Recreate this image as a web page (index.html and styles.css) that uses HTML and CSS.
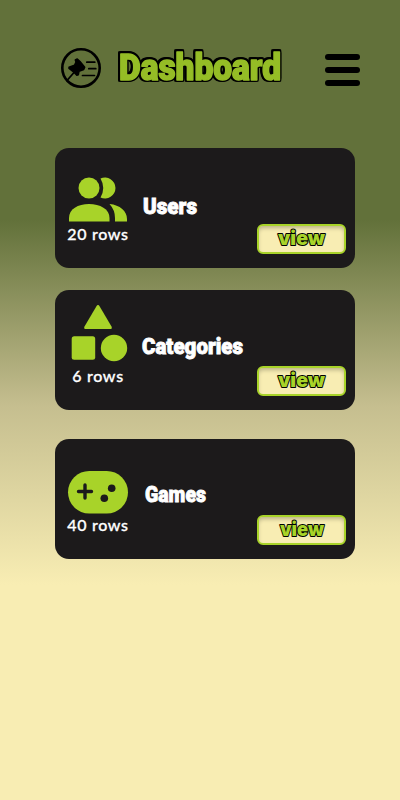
FILE: index.html
```html
<!DOCTYPE html>
<html lang="en">
<head>
<meta charset="utf-8">
<meta name="viewport" content="width=device-width, initial-scale=1">
<title>Dashboard</title>
<link rel="stylesheet" href="styles.css">
</head>
<body>
<header class="header">
  <svg class="logo" viewBox="0 0 40 40" fill="none" stroke="#000" stroke-linecap="round">
    <circle cx="20" cy="20" r="18.7" stroke-width="2.6"/>
    <path d="M6 32.500 13 24.500" stroke-width="1.800"/>
    <path d="M14.300 12 16.300 11 19 13.500 23.700 19.300 22.700 21.500 18 23.300 17.300 26.800 15.800 27.300 12.500 23.800 8 20.500 8 19.200 13.500 17.300 15 14Z" fill="#000" stroke-width="1.500" stroke-linejoin="round"/>
    <path d="M25.800 14.200h8M27.800 20.700h7M21.500 27.500h12" stroke-width="1.700"/>
  </svg>
  <h1 class="title"><svg width="170" height="44"><text x="5" y="32" textLength="162" lengthAdjust="spacingAndGlyphs">Dashboard</text></svg></h1>
  <button class="menu" aria-label="Menu"><span></span><span></span><span></span></button>
</header>
<main class="cards">
  <section class="card">
    <div class="summary">
      <svg class="icon" viewBox="0 0 60 60">
        <circle cx="21" cy="26" r="10.500"/>
        <path d="M32.500 16.500a10.500 10.500 0 1 1 0 19q5.500-9.500 0-19Z"/>
        <path d="M1 59.500v-3.500C1 47 10 42 21 42s20.500 5 20.500 14v3.500Z"/>
        <path d="M41.500 42C52 43 59 49 59 57v2.500H47V56q0-8-5.500-14Z"/>
      </svg>
      <p class="rows">20 rows</p>
    </div>
    <h2 class="name"><svg width="110" height="34"><text x="3" y="24" textLength="54" lengthAdjust="spacingAndGlyphs">Users</text></svg></h2>
    <button class="view"><svg width="60" height="26"><text x="6" y="19" textLength="47" lengthAdjust="spacingAndGlyphs">view</text></svg></button>
  </section>
  <section class="card categories">
    <div class="summary">
      <svg class="icon" viewBox="0 0 60 60">
        <path d="M28.300 2.400q1.700-2.600 3.400 0L43.500 22.400q1.200 2.600-1.700 2.600H18.200q-2.900 0-1.700-2.600Z"/>
        <rect x="3.700" y="32.200" width="23.500" height="23.500" rx="2.500"/>
        <circle cx="46" cy="44" r="13.200"/>
      </svg>
      <p class="rows">6 rows</p>
    </div>
    <h2 class="name"><svg width="110" height="34"><text x="2" y="22" textLength="101" lengthAdjust="spacingAndGlyphs">Categories</text></svg></h2>
    <button class="view"><svg width="60" height="26"><text x="6" y="19" textLength="47" lengthAdjust="spacingAndGlyphs">view</text></svg></button>
  </section>
  <section class="card games">
    <div class="summary">
      <svg class="icon" viewBox="0 0 60 60">
        <rect y="18" width="60" height="42.500" rx="21.250"/>
        <path class="cross" d="M17 32v13M10.500 38.500h13"/>
        <circle class="dot" cx="43.700" cy="35.300" r="3.800"/>
        <circle class="dot" cx="36.300" cy="45.300" r="3.800"/>
      </svg>
      <p class="rows">40 rows</p>
    </div>
    <h2 class="name"><svg width="110" height="34"><text x="5" y="21" textLength="61" lengthAdjust="spacingAndGlyphs">Games</text></svg></h2>
    <button class="view"><svg width="60" height="26"><text x="8" y="19" textLength="44" lengthAdjust="spacingAndGlyphs">view</text></svg></button>
  </section>
</main>
</body>
</html>
```
FILE: styles.css
```css
* { box-sizing: border-box; }
body {
  margin: 0;
  min-height: 800px;
  background: linear-gradient(#62713a 0, #62713a 220px, #c5be8f 405px, #f8edb3 585px);
  font-family: Lato, "Open Sans", sans-serif;
}
svg { display: block; overflow: visible; }
button { margin: 0; padding: 0; border: 0; background: none; }
.header {
  display: flex;
  height: 148px;
  padding: 48px 40.500px 0 61px;
}
.logo { width: 40px; height: 40px; }
.title { margin: 0 0 0 13px; font-size: 38px; }
.title text {
  font-family: Roboto, sans-serif;
  font-size: 37px;
  font-weight: 900;
  fill: #95bd26;
  stroke: #95bd26;
  stroke-width: 1.500px;
  stroke-linejoin: round;
  filter: drop-shadow(1.300px 0 0 #000) drop-shadow(-1.300px 0 0 #000) drop-shadow(0 1.300px 0 #000) drop-shadow(0 -1.300px 0 #000);
}
.menu {
  display: flex;
  flex-direction: column;
  gap: 7px;
  width: 35px;
  margin: 6px 0 0 auto;
}
.menu span { display: block; height: 6px; border-radius: 3px; background: #000; }
.cards { width: 300px; margin-left: 55px; }
.card {
  display: grid;
  grid-template-columns: 60px 110px 1fr;
  height: 120px;
  padding: 14px 9px 14px 13px;
  border-radius: 14px;
  background: #1c1a1b;
}
.categories { margin-top: 22px; }
.games { margin-top: 29px; }
.icon { width: 60px; height: 60px; fill: #a8d329; }
.cross { fill: none; stroke: #1c1a1b; stroke-width: 3.400px; stroke-linecap: round; }
.dot { fill: #1c1a1b; }
.rows {
  margin: 1px -5px 0;
  color: #fff;
  font-size: 16px;
  font-weight: 500;
  line-height: 22px;
  letter-spacing: .7px;
  text-align: center;
  white-space: nowrap;
  -webkit-text-stroke: .3px #fff;
}
.name { margin: 28px 0 0 12px; }
.name text {
  font-family: Roboto, sans-serif;
  font-size: 22.500px;
  font-weight: 900;
  fill: #fff;
  stroke: #fff;
  stroke-width: .9px;
}
.view {
  display: flex;
  align-items: center;
  justify-content: center;
  width: 89px;
  height: 30px;
  align-self: end;
  justify-self: end;
  border: 2px solid #a8d329;
  border-radius: 6px;
  background: #f8edb3;
  box-shadow: inset 0 3px 4px -1px rgba(0, 0, 0, .25);
}
.view text {
  font-family: Inter, sans-serif;
  font-size: 20px;
  font-weight: 900;
  fill: #a8d329;
  stroke: #000;
  stroke-width: 2px;
  stroke-linejoin: round;
  paint-order: stroke;
}
```
